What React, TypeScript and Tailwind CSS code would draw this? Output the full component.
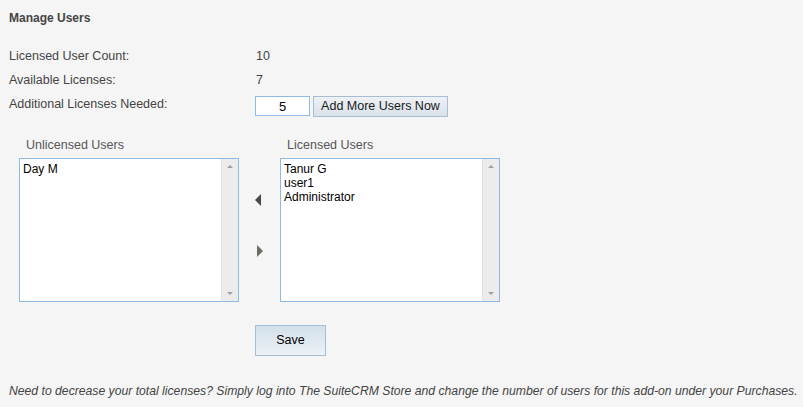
import React from 'react';

const unlicensed = ['Day M'];
const licensed = ['Tanur G', 'user1', 'Administrator'];

const ListBox: React.FC<{ items: string[] }> = ({ items }) => (
    <div className='flex w-[220px] h-[144px] border border-[#8ebbe6] bg-white'>
        <div className='flex-1 flex flex-col pl-[3px] pt-[3px] text-[12px] leading-[14px] text-black font-["Liberation_Sans",sans-serif]'>
            {items.map((u) => (
                <div key={u}>{u}</div>
            ))}
        </div>
        <div className='w-[17px] bg-[#ececec] border-l border-[#e3e3e3] flex flex-col justify-between items-center py-[6px]'>
            <div className='w-0 h-0 border-l-[3px] border-r-[3px] border-b-[3px] border-l-transparent border-r-transparent border-b-[#a0a0a0]' />
            <div className='w-0 h-0 border-l-[3px] border-r-[3px] border-t-[3px] border-l-transparent border-r-transparent border-t-[#a0a0a0]' />
        </div>
    </div>
);

export default function App() {
    return (
        <div className='w-[803px] h-[407px] bg-[#f5f5f5] text-[#444] font-["Liberation_Sans",Arial,sans-serif] text-[12px] flex flex-col pl-[9px] pt-[11px]'>
            <h3 className='font-bold text-[12px] leading-[14px]'>Manage Users</h3>

            <div className='flex flex-col mt-[24px] gap-[10px]'>
                <div className='flex items-center h-[14px]'>
                    <span className='w-[247px] text-[12.5px]'>Licensed User Count:</span>
                    <span className='text-[12.5px]'>10</span>
                </div>
                <div className='flex items-center h-[14px]'>
                    <span className='w-[247px] text-[12.5px]'>Available Licenses:</span>
                    <span className='text-[12.5px]'>7</span>
                </div>
                <div className='flex items-center h-[14px]'>
                    <span className='w-[246px] text-[12.5px]'>Additional Licenses Needed:</span>
                    <input
                        readOnly
                        value='5'
                        className='mt-[4px] w-[55px] h-[20px] border border-[#8ebbe6] bg-white text-center text-[13px] text-black outline-none font-["Liberation_Sans",sans-serif]'
                    />
                    <button className='mt-[4px] ml-[3px] w-[135px] h-[21px] border border-[#a9bdd2] bg-gradient-to-b from-[#eef2f6] to-[#d9e1ea] text-[12.5px] text-[#1a1a1a] font-["Liberation_Sans",sans-serif]'>
                        Add More Users Now
                    </button>
                </div>
            </div>

            <div className='flex mt-[27px] ml-[10px]'>
                <div className='flex flex-col'>
                    <span className='ml-[7px] text-[12.5px] leading-[14px] text-[#555]'>Unlicensed Users</span>
                    <div className='mt-[6px]'>
                        <ListBox items={unlicensed} />
                    </div>
                </div>
                <div className='w-[41px] flex flex-col items-center pt-[56px] gap-[39px]'>
                    <div className='w-0 h-0 border-t-[6px] border-b-[6px] border-r-[6px] border-t-transparent border-b-transparent border-r-[#4a4a4a] -ml-[4px]' />
                    <div className='w-0 h-0 border-t-[6px] border-b-[6px] border-l-[6px] border-t-transparent border-b-transparent border-l-[#6b6d5e]' />
                </div>
                <div className='flex flex-col'>
                    <span className='ml-[7px] text-[12.5px] leading-[14px] text-[#555]'>Licensed Users</span>
                    <div className='mt-[6px]'>
                        <ListBox items={licensed} />
                    </div>
                </div>
            </div>

            <div className='ml-[246px] mt-[23px]'>
                <button className='w-[71px] h-[31px] border border-[#a4c0d8] bg-gradient-to-b from-[#d3e0ea] to-[#ecf1f5] text-[12.5px] text-black font-["Liberation_Sans",sans-serif]'>
                    Save
                </button>
            </div>

            <p className='mt-[28px] italic text-[12.2px] leading-[14px] whitespace-nowrap'>
                Need to decrease your total licenses? Simply log into The SuiteCRM Store and change the number of users for this add-on under your Purchases.
            </p>
        </div>
    );
}
